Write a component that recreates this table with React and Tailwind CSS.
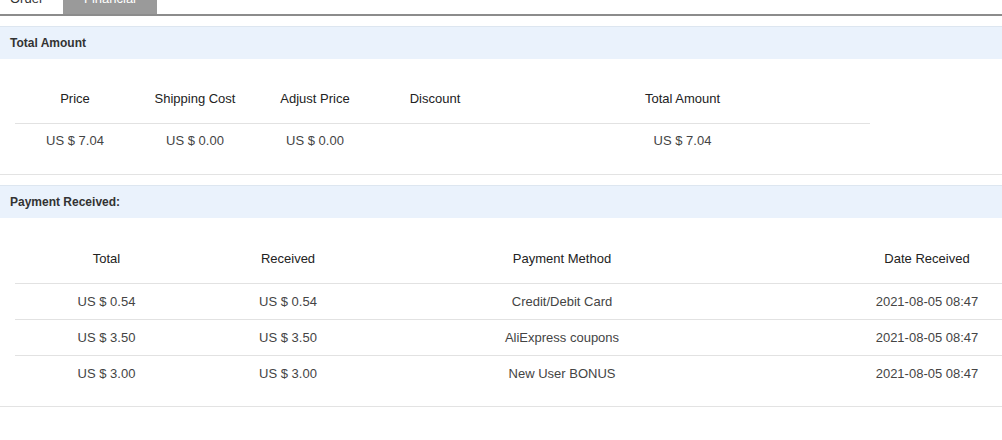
export default function App() {
  const font = { fontFamily: '"Liberation Sans", Arial, sans-serif' };
  const payments = [
    ["US $ 0.54", "US $ 0.54", "Credit/Debit Card", "2021-08-05 08:47"],
    ["US $ 3.50", "US $ 3.50", "AliExpress coupons", "2021-08-05 08:47"],
    ["US $ 3.00", "US $ 3.00", "New User BONUS", "2021-08-05 08:47"],
  ];
  return (
    <div className="w-[1002px] h-[440px] bg-white overflow-hidden text-[#333]" style={font}>
      {/* tabs */}
      <div className="h-[16px] border-b-2 border-[#8c8c8c] overflow-hidden flex">
        <div className="-mt-[16px] h-[30px] w-[63px] flex items-center pl-[10px] text-[13px] text-[#333]">Order</div>
        <div className="-mt-[16px] h-[30px] w-[94px] flex items-center justify-center bg-[#9a9a9a] text-[13px] text-white">Financial</div>
      </div>

      {/* Total amount */}
      <div className="mt-[10px] border-b border-[#e3e3e3] pb-[16px]">
        <div className="h-[33px] border-t border-[#dde6f0] bg-[#eaf2fc] flex items-center pl-[10px] text-[12px] font-bold text-[#333]">
          Total Amount
        </div>
        <div className="mt-[16px] ml-[15px] w-[855px]">
          <div className="flex h-[49px] items-center border-b border-[#e2e2e2] text-[13px] text-[#222]">
            <div className="w-[120px] text-center">Price</div>
            <div className="w-[120px] text-center">Shipping Cost</div>
            <div className="w-[120px] text-center">Adjust Price</div>
            <div className="w-[120px] text-center">Discount</div>
            <div className="flex-1 text-center">Total Amount</div>
          </div>
          <div className="flex h-[34px] items-center text-[13px] text-[#444]">
            <div className="w-[120px] text-center">US $ 7.04</div>
            <div className="w-[120px] text-center">US $ 0.00</div>
            <div className="w-[120px] text-center">US $ 0.00</div>
            <div className="w-[120px] text-center"></div>
            <div className="flex-1 text-center">US $ 7.04</div>
          </div>
        </div>
      </div>

      {/* Payment received */}
      <div className="mt-[10px] border-b border-[#e3e3e3] pb-[14px]">
        <div className="h-[33px] border-t border-[#dde6f0] bg-[#eaf2fc] flex items-center pl-[10px] text-[12px] font-bold text-[#333]">
          Payment Received:
        </div>
        <div className="mt-[17px] ml-[15px] w-[987px] overflow-hidden">
          <div className="w-[1093px]">
            <div className="flex h-[49px] items-center border-b border-[#e2e2e2] text-[13px] text-[#222]">
              <div className="w-[183px] text-center">Total</div>
              <div className="w-[180px] text-center">Received</div>
              <div className="w-[368px] text-center">Payment Method</div>
              <div className="w-[362px] text-center">Date Received</div>
            </div>
            {payments.map((r, i) => (
              <div
                key={i}
                className={
                  "flex h-[36px] items-center text-[13px] text-[#444] " +
                  (i < payments.length - 1 ? "border-b border-[#e2e2e2]" : "")
                }
              >
                <div className="w-[183px] text-center">{r[0]}</div>
                <div className="w-[180px] text-center">{r[1]}</div>
                <div className="w-[368px] text-center">{r[2]}</div>
                <div className="w-[362px] text-center">{r[3]}</div>
              </div>
            ))}
          </div>
        </div>
      </div>
    </div>
  );
}
